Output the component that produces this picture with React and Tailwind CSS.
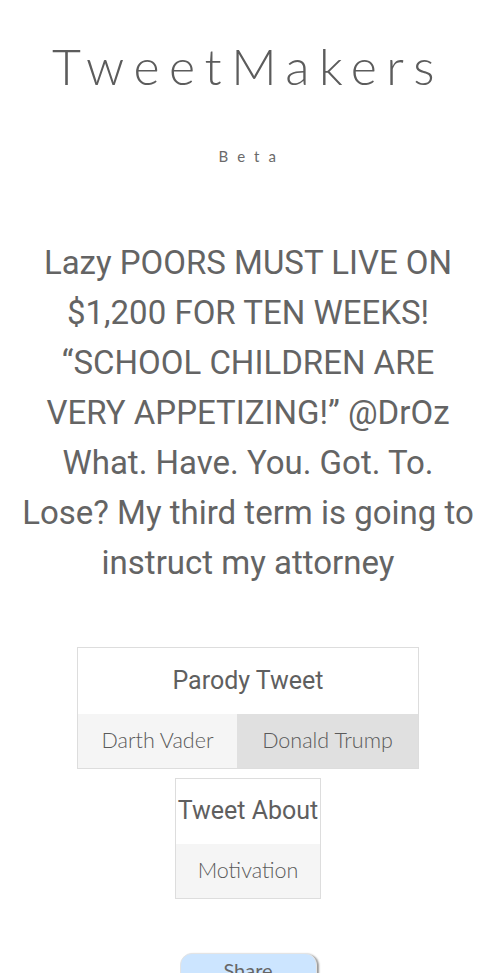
import React from 'react';

export default function App() {
  return (
    <div className="min-h-screen bg-white text-center text-[#666]">
      {/* Header */}
      <header className="pt-[36px]">
        <h1 className="font-['Lato',sans-serif] font-light text-[50px] leading-[60px] tracking-[0.19em] text-[#5c5c5c]">
          TweetMakers
        </h1>
        <p className="mt-[49px] font-['Lato',sans-serif] text-[15px] tracking-[0.6em] pl-[0.5em] text-[#6a6a6a]">
          Beta
        </p>
      </header>

      {/* Tweet */}
      <p className="mt-[70px] px-[20px] font-['Roboto',sans-serif] text-[33px] leading-[50px] text-[#646464]">
        Lazy POORS MUST LIVE ON $1,200 FOR TEN WEEKS! “SCHOOL CHILDREN ARE VERY APPETIZING!” @DrOz What. Have. You. Got. To. Lose? My third term is going to instruct my attorney
      </p>

      {/* Parody selector */}
      <div className="mt-[59px] flex flex-col items-center">
        <div className="w-[342px] border border-[#ddd]">
          <div className="h-[66px] flex items-center justify-center font-['Roboto',sans-serif] text-[25px] text-[#5f5f5f]">
            Parody Tweet
          </div>
          <div className="flex h-[54px] font-['Lato',sans-serif] font-light text-[21.5px] text-[#5a5a5a]">
            <button className="w-[159px] bg-[#f5f5f5]">Darth Vader</button>
            <button className="flex-1 bg-[#e0e0e0]">Donald Trump</button>
          </div>
        </div>

        <div className="mt-[9px] w-[146px] border border-[#ddd]">
          <div className="h-[65px] flex items-center justify-center font-['Roboto',sans-serif] text-[25px] text-[#5f5f5f]">
            Tweet About
          </div>
          <div className="h-[54px] flex items-center justify-center bg-[#f5f5f5] font-['Lato',sans-serif] font-light text-[21.5px] text-[#5a5a5a]">
            Motivation
          </div>
        </div>

        <button className="mt-[54px] w-[137px] h-[44px] rounded-[12px] bg-[#cce5ff] border border-[#e4e4e4] shadow-[2px_1px_2px_#999] font-['Lato',sans-serif] text-[20px] text-[#666] pb-[10px]">
          Share
        </button>
      </div>
    </div>
  );
}
